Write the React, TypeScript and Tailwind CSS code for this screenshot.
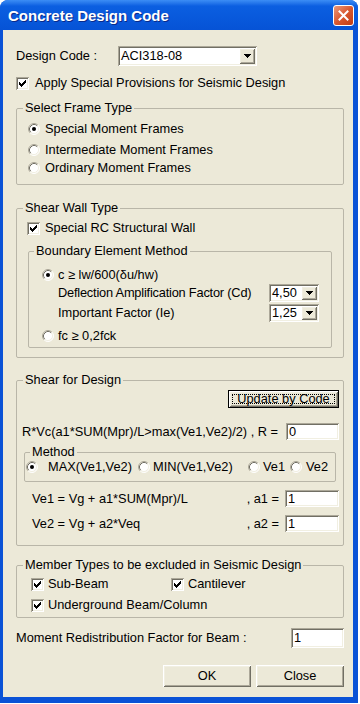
import React from "react";

const sunken =
  "bg-white shadow-[inset_1px_1px_0_#aca899,inset_-1px_-1px_0_#ffffff,inset_2px_2px_0_#716f64,inset_-2px_-2px_0_#f1efe2]";
const raised =
  "bg-[#ece9d8] shadow-[inset_1px_1px_0_#ffffff,inset_-1px_-1px_0_#716f64,inset_2px_2px_0_#f1efe2,inset_-2px_-2px_0_#aca899]";
const group = "border border-[#b9b6a8] rounded-[2px]";

function Check({ checked = true }: { checked?: boolean }) {
  return (
    <span className={`relative flex w-[13px] h-[13px] shrink-0 ${sunken}`}>
      {checked && (
        <svg className="m-[3px]" width="7" height="7" viewBox="0 0 7 7" shapeRendering="crispEdges">
          <rect x="6" y="0" width="1" height="1" />
          <rect x="5" y="1" width="2" height="1" />
          <rect x="0" y="2" width="1" height="1" />
          <rect x="4" y="2" width="3" height="1" />
          <rect x="0" y="3" width="2" height="1" />
          <rect x="3" y="3" width="3" height="1" />
          <rect x="0" y="4" width="5" height="1" />
          <rect x="1" y="5" width="3" height="1" />
          <rect x="2" y="6" width="1" height="1" />
        </svg>
      )}
    </span>
  );
}

function Radio({ checked = false }: { checked?: boolean }) {
  return (
    <svg width="12" height="12" viewBox="0 0 12 12" className="shrink-0">
      <circle cx="6" cy="6" r="5" fill="#fff" />
      <path d="M2.11 9.89 A5.5 5.5 0 0 1 9.89 2.11" stroke="#aca899" fill="none" />
      <path d="M9.89 2.11 A5.5 5.5 0 0 1 2.11 9.89" stroke="#ffffff" fill="none" />
      <path d="M2.82 9.18 A4.5 4.5 0 0 1 9.18 2.82" stroke="#716f64" fill="none" />
      <path d="M9.18 2.82 A4.5 4.5 0 0 1 2.82 9.18" stroke="#f1efe2" fill="none" />
      {checked && <circle cx="6" cy="6" r="2" fill="#000" />}
    </svg>
  );
}

function Arrow() {
  return (
    <svg width="7" height="4" viewBox="0 0 7 4" shapeRendering="crispEdges">
      <rect x="0" y="0" width="7" height="1" />
      <rect x="1" y="1" width="5" height="1" />
      <rect x="2" y="2" width="3" height="1" />
      <rect x="3" y="3" width="1" height="1" />
    </svg>
  );
}

function Combo({ value, className }: { value: string; className: string }) {
  return (
    <div className={`flex p-[2px] ${sunken} ${className}`}>
      <span className="flex-1 pl-[1px] flex items-center">{value}</span>
      <span className={`w-[16px] flex items-center justify-center ${raised}`}>
        <Arrow />
      </span>
    </div>
  );
}

function Edit({ value, className }: { value: string; className: string }) {
  return <div className={`flex items-center pl-[3px] shrink-0 ${sunken} ${className}`}>{value}</div>;
}

export default function App() {
  return (
    <div className="w-[360px] h-[704px] bg-white font-['Liberation_Sans',Arial,sans-serif] text-[12.8px] leading-[14px] text-black">
      <div className="w-[358px] h-[703px] flex flex-col rounded-t-[8px] overflow-hidden bg-[#0a52d6]">
        {/* Title bar */}
        <div className="h-[30px] shrink-0 flex items-center pl-[8px] pr-[4px] bg-linear-to-b from-[#3b8df5] via-[#0b5fe1] via-20% to-[#0653d6]">
          <span className="flex-1 pt-[2px] text-white font-bold text-[15px] leading-[18px] [text-shadow:1px_1px_0_#0a2a8a]">
            Concrete Design Code
          </span>
          <div className="w-[21px] h-[21px] rounded-[3px] border border-white bg-linear-to-br from-[#e9987a] via-[#d9582f] to-[#c13c13] flex items-center justify-center">
            <svg width="11" height="11" viewBox="0 0 11 11">
              <path d="M1.5 1.5 L9.5 9.5 M9.5 1.5 L1.5 9.5" stroke="#fff" strokeWidth="2" strokeLinecap="square" />
            </svg>
          </div>
        </div>

        {/* Body */}
        <div className="flex-1 ml-[3px] mr-[5px] mb-[6px] bg-[#ece9d8] pl-[13px] pt-[16px]">
          <div className="w-[328px] flex flex-col">
            <div className="h-[20px] flex items-center">
              <span className="w-[102px]">Design Code :</span>
              <Combo value="ACI318-08" className="w-[139px] h-[20px]" />
            </div>

            <div className="mt-[10px] h-[14px] flex items-center gap-[6px]">
              <Check />
              <span>Apply Special Provisions for Seismic Design</span>
            </div>

            {/* Select Frame Type */}
            <fieldset className={`${group} mt-[11px] pb-[8px]`}>
              <legend className="ml-[6px] px-[2px]">Select Frame Type</legend>
              <div className="pl-[11px] flex flex-col">
                <div className="mt-[6px] h-[16px] flex items-center gap-[5px]">
                  <Radio checked />
                  <span>Special Moment Frames</span>
                </div>
                <div className="mt-[5px] h-[16px] flex items-center gap-[5px]">
                  <Radio />
                  <span>Intermediate Moment Frames</span>
                </div>
                <div className="mt-[2px] h-[16px] flex items-center gap-[5px]">
                  <Radio />
                  <span>Ordinary Moment Frames</span>
                </div>
              </div>
            </fieldset>

            {/* Shear Wall Type */}
            <fieldset className={`${group} mt-[16px] pb-[9px]`}>
              <legend className="ml-[6px] px-[2px]">Shear Wall Type</legend>
              <div className="flex flex-col">
                <div className="pl-[10px] mt-[6px] h-[14px] flex items-center gap-[5px]">
                  <Check />
                  <span>Special RC Structural Wall</span>
                </div>
                <fieldset className={`${group} mt-[9px] ml-[11px] mr-[11px] pb-[3px]`}>
                  <legend className="ml-[5px] px-[2px]">Boundary Element Method</legend>
                  <div className="pl-[13px] pr-[12px] flex flex-col">
                    <div className="mt-[9px] h-[16px] flex items-center gap-[4px]">
                      <Radio checked />
                      <span>c ≥ lw/600(δu/hw)</span>
                    </div>
                    <div className="mt-[1px] h-[18px] flex items-center pl-[16px]">
                      <span className="flex-1 tracking-[-0.2px]">Deflection Amplification Factor (Cd)</span>
                      <Combo value="4,50" className="w-[50px] h-[18px]" />
                    </div>
                    <div className="mt-[2px] h-[18px] flex items-center pl-[16px]">
                      <span className="flex-1">Important Factor (Ie)</span>
                      <Combo value="1,25" className="w-[50px] h-[18px]" />
                    </div>
                    <div className="mt-[6px] h-[16px] flex items-center gap-[4px]">
                      <Radio />
                      <span>fc ≥ 0,2fck</span>
                    </div>
                  </div>
                </fieldset>
              </div>
            </fieldset>

            {/* Shear for Design */}
            <fieldset className={`${group} mt-[15px] pb-[13px]`}>
              <legend className="ml-[6px] px-[2px]">Shear for Design</legend>
              <div className="flex flex-col">
                <div className="mt-[3px] h-[18px] flex justify-end pr-[4px]">
                  <div className={`w-[111px] h-[18px] flex border border-black ${raised}`}>
                    <span className="flex-1 m-[3px] border border-dotted border-black flex items-center justify-center leading-[12px]">
                      Update by Code
                    </span>
                  </div>
                </div>
                <div className="mt-[15px] h-[17px] flex items-center pl-[5px] pr-[4px]">
                  <span className="flex-1 whitespace-nowrap">R*Vc(a1*SUM(Mpr)/L&gt;max(Ve1,Ve2)/2) , R =</span>
                  <Edit value="0" className="w-[53px] h-[17px]" />
                </div>
                <fieldset className={`${group} mt-[5px] ml-[7px] mr-[7px] pb-[7px]`}>
                  <legend className="ml-[5px] px-[2px]">Method</legend>
                  <div className="mt-[1px] h-[14px] flex items-center pl-[1px] whitespace-nowrap">
                    <div className="w-[112px] shrink-0 flex items-center gap-[10px]">
                      <Radio checked />
                      <span>MAX(Ve1,Ve2)</span>
                    </div>
                    <div className="w-[110px] shrink-0 flex items-center gap-[3px]">
                      <Radio />
                      <span>MIN(Ve1,Ve2)</span>
                    </div>
                    <div className="w-[42px] shrink-0 flex items-center gap-[3px]">
                      <Radio />
                      <span>Ve1</span>
                    </div>
                    <div className="flex items-center gap-[4px]">
                      <Radio />
                      <span>Ve2</span>
                    </div>
                  </div>
                </fieldset>
                <div className="mt-[8px] h-[17px] flex items-center pl-[15px] pr-[4px] whitespace-nowrap">
                  <span className="flex-1">Ve1 = Vg + a1*SUM(Mpr)/L</span>
                  <span className="mr-[6px]">, a1 =</span>
                  <Edit value="1" className="w-[54px] h-[17px]" />
                </div>
                <div className="mt-[8px] h-[17px] flex items-center pl-[15px] pr-[4px] whitespace-nowrap">
                  <span className="flex-1">Ve2 = Vg + a2*Veq</span>
                  <span className="mr-[6px]">, a2 =</span>
                  <Edit value="1" className="w-[54px] h-[17px]" />
                </div>
              </div>
            </fieldset>

            {/* Member Types */}
            <fieldset className={`${group} mt-[12px] pb-[5px]`}>
              <legend className="ml-[6px] px-[2px]">Member Types to be excluded in Seismic Design</legend>
              <div className="pl-[14px] flex flex-col">
                <div className="mt-[5px] h-[14px] flex items-center">
                  <div className="w-[140px] flex items-center gap-[4px]">
                    <Check />
                    <span>Sub-Beam</span>
                  </div>
                  <div className="flex items-center gap-[4px]">
                    <Check />
                    <span>Cantilever</span>
                  </div>
                </div>
                <div className="mt-[7px] h-[14px] flex items-center gap-[4px]">
                  <Check />
                  <span>Underground Beam/Column</span>
                </div>
              </div>
            </fieldset>

            <div className="mt-[10px] h-[20px] flex items-center">
              <span className="flex-1">Moment Redistribution Factor for Beam :</span>
              <Edit value="1" className="w-[53px] h-[20px]" />
            </div>

            <div className="mt-[17px] h-[22px] flex justify-end gap-[5px]">
              <div className={`w-[88px] h-[22px] flex items-center justify-center ${raised}`}>OK</div>
              <div className={`w-[88px] h-[22px] flex items-center justify-center ${raised}`}>Close</div>
            </div>
          </div>
        </div>
      </div>
    </div>
  );
}
